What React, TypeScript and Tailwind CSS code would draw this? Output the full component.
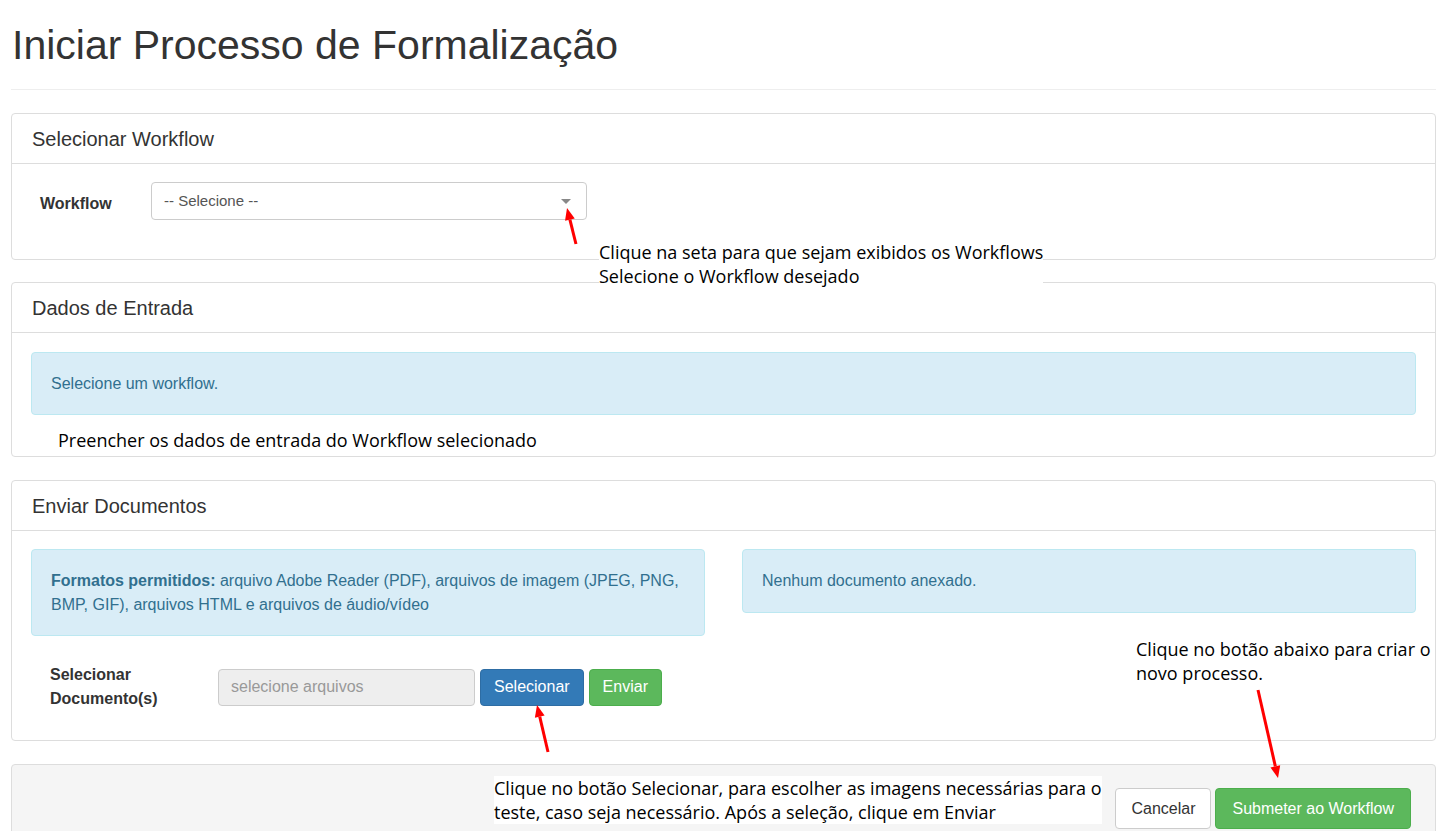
import React from "react";

const Arrow = ({ x1, y1, x2, y2, className }: { x1: number; y1: number; x2: number; y2: number; className: string }) => {
  const ang = Math.atan2(y2 - y1, x2 - x1);
  const L = 12, W = 5;
  const bx = x2 - L * Math.cos(ang), by = y2 - L * Math.sin(ang);
  const px = -Math.sin(ang) * W, py = Math.cos(ang) * W;
  return (
    <svg className={className} width="1440" height="831" viewBox="0 0 1440 831">
      <line x1={x1} y1={y1} x2={bx} y2={by} stroke="#ff0000" strokeWidth="3" />
      <polygon points={`${x2},${y2} ${bx + px},${by + py} ${bx - px},${by - py}`} fill="#ff0000" />
    </svg>
  );
};

const note = "absolute text-[18px] leading-[24px] text-black bg-white whitespace-nowrap";

export default function App() {
  return (
    <div className="relative w-[1440px] h-[831px] overflow-hidden bg-white text-[16px] text-[#333]" style={{ fontFamily: '"Liberation Sans", Arial, sans-serif' }}>
      <div className="pl-[11px] pr-[4px]">
        <h1 className="text-[41px] leading-[44px] pt-[23px] pb-[22px] ml-px text-[#333]">Iniciar Processo de Formalização</h1>
        <div className="border-t border-[#eee] mb-[23px]" />

        <div className="border border-[#ddd] rounded-[4px] mb-[22px]">
          <div className="h-[50px] px-[20px] flex items-center border-b border-[#ddd] text-[20px]">Selecionar Workflow</div>
          <div className="h-[95px] flex items-start pt-[18px] px-[28px]">
            <div className="w-[111px] font-bold pt-[10px]">Workflow</div>
            <div className="w-[436px] h-[38px] border border-[#ccc] rounded-[4px] flex items-center justify-between px-[12px] text-[#555] text-[15px]">
              <span>-- Selecione --</span>
              <span className="w-0 h-0 border-l-[5px] border-r-[5px] border-t-[5px] border-l-transparent border-r-transparent border-t-[#888] mr-[3px]" />
            </div>
          </div>
        </div>

        <div className="border border-[#ddd] rounded-[4px] mb-[23px] h-[175px]">
          <div className="h-[50px] px-[20px] flex items-center border-b border-[#ddd] text-[20px]">Dados de Entrada</div>
          <div className="p-[19px]">
            <div className="h-[63px] bg-[#d9edf7] border border-[#bce8f1] rounded-[4px] text-[#31708f] flex items-center px-[19px]">Selecione um workflow.</div>
          </div>
        </div>

        <div className="border border-[#ddd] rounded-[4px] mb-[23px] h-[261px]">
          <div className="h-[50px] px-[20px] flex items-center border-b border-[#ddd] text-[20px]">Enviar Documentos</div>
          <div className="pt-[18px] px-[19px] grid grid-cols-2 gap-[37px] items-start">
            <div className="h-[87px] bg-[#d9edf7] border border-[#bce8f1] rounded-[4px] text-[#31708f] px-[19px] pt-[19px] leading-[24px]">
              <b>Formatos permitidos:</b> arquivo Adobe Reader (PDF), arquivos de imagem (JPEG, PNG, BMP, GIF), arquivos HTML e arquivos de áudio/vídeo
            </div>
            <div className="h-[64px] bg-[#d9edf7] border border-[#bce8f1] rounded-[4px] text-[#31708f] px-[19px] flex items-center">Nenhum documento anexado.</div>
          </div>
          <div className="flex items-center mt-[27px] px-[38px]">
            <div className="w-[168px] font-bold leading-[24px]">Selecionar<br />Documento(s)</div>
            <div className="w-[257px] h-[37px] bg-[#eee] border border-[#ccc] rounded-[4px] flex items-center px-[12px] text-[#999]">selecione arquivos</div>
            <div className="ml-[5px] h-[37px] px-[13px] bg-[#337ab7] border border-[#2e6da4] rounded-[4px] text-white flex items-center">Selecionar</div>
            <div className="ml-[5px] h-[37px] px-[13px] bg-[#5cb85c] border border-[#4cae4c] rounded-[4px] text-white flex items-center">Enviar</div>
          </div>
        </div>

        <div className="h-[80px] bg-[#f5f5f5] border border-[#ddd] rounded-t-[4px] flex justify-end items-start pt-[23px] pr-[24px] gap-[4px]">
          <div className="h-[41px] px-[15px] bg-white border border-[#ccc] rounded-[4px] flex items-center text-[16px]">Cancelar</div>
          <div className="h-[41px] px-[16px] bg-[#5cb85c] border border-[#4cae4c] rounded-[4px] flex items-center text-[16px] text-white">Submeter ao Workflow</div>
        </div>
      </div>

      <div style={{ fontFamily: '"Open Sans", "Noto Sans", sans-serif' }}>
        <div className={note} style={{ left: 599, top: 240 }}>Clique na seta para que sejam exibidos os Workflows<br />Selecione o Workflow desejado</div>
        <div className={note + " bg-transparent"} style={{ left: 58, top: 428 }}>Preencher os dados de entrada do Workflow selecionado</div>
        <div className={note} style={{ left: 1136, top: 637 }}>Clique no botão abaixo para criar o<br />novo processo.</div>
        <div className={note + " bg-[#f5f5f5]"} style={{ left: 494, top: 776 }}>Clique no botão Selecionar, para escolher as imagens necessárias para o<br />teste, caso seja necessário. Após a seleção, clique em Enviar</div>
      </div>
      <Arrow className="absolute left-0 top-0 pointer-events-none" x1={576} y1={244} x2={567} y2={208} />
      <Arrow className="absolute left-0 top-0 pointer-events-none" x1={548} y1={752} x2={537} y2={705} />
      <Arrow className="absolute left-0 top-0 pointer-events-none" x1={1258} y1={690} x2={1278} y2={778} />
    </div>
  );
}
